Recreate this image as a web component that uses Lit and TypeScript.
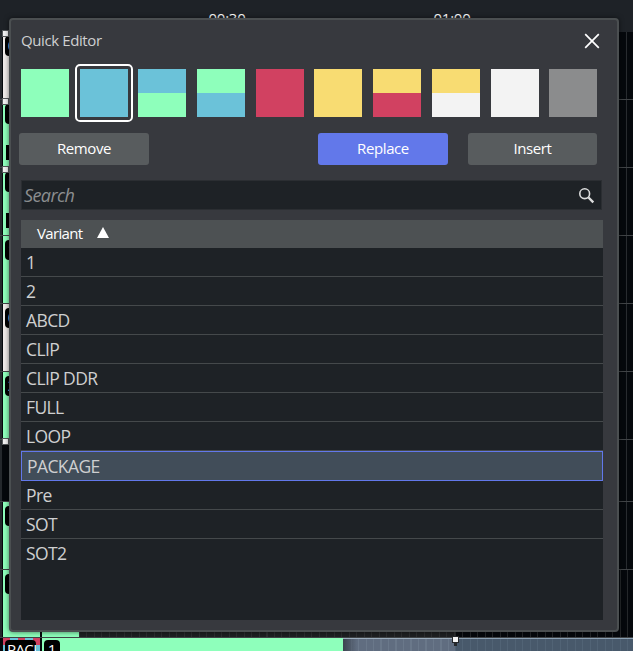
import { css, html, LitElement, nothing } from 'lit';
import { customElement, property, state } from 'lit/decorators.js';
import { classMap } from 'lit/directives/class-map.js';

interface Lane {
  color: string;
  label: string;
  short?: boolean;
  key?: boolean;
  mark?: boolean;
}

const GREEN = '#8effbb';
const BLUE = '#6bc2d9';
const RED = '#d14161';
const YELLOW = '#f8dc72';
const WHITE = '#f3f3f3';
const GRAY = '#8b8c8d';

const LANES: Lane[] = [
  { color: '#efebe9', label: '0', key: true },
  { color: GREEN, label: '1', key: true, mark: true },
  { color: GREEN, label: '1', key: true, mark: true },
  { color: GREEN, label: '1' },
  { color: '#efebe9', label: '0' },
  { color: GREEN, label: '2' },
  { color: '#05080c', label: '', short: true, key: true },
  { color: GREEN, label: '1' },
  { color: GREEN, label: '1' },
];

const SWATCHES = [
  [GREEN, GREEN],
  [BLUE, BLUE],
  [BLUE, GREEN],
  [GREEN, BLUE],
  [RED, RED],
  [YELLOW, YELLOW],
  [YELLOW, RED],
  [YELLOW, WHITE],
  [WHITE, WHITE],
  [GRAY, GRAY],
];

const VARIANTS = ['1', '2', 'ABCD', 'CLIP', 'CLIP DDR', 'FULL', 'LOOP', 'PACKAGE', 'Pre', 'SOT', 'SOT2'];

@customElement('timeline-view')
export class TimelineView extends LitElement {

  static get styles() {
    return css`
      :host {
        display: flex;
        flex-direction: column;
        height: 100%;
        background: #05080c;
        color: #fff;
        font-family: 'Open Sans', 'Noto Sans', sans-serif;
      }
      .ruler {
        position: relative;
        flex: none;
        height: 32px;
        background: #1e2227;
        font-size: 15px;
        line-height: 20px;
        letter-spacing: -0.25px;
      }
      .time {
        position: absolute;
        top: 8px;
        transform: translateX(-50%);
      }
      .lane {
        position: relative;
        flex: none;
        display: flex;
        gap: 2px;
        box-sizing: border-box;
        height: 68px;
        padding-left: 3px;
        border-bottom: 1px solid #404346;
        background:
          linear-gradient(#24282c, #24282c) 0 0 / 2px 100% no-repeat,
          linear-gradient(#282b2f, #282b2f) 626px 0 / 1px 100% no-repeat,
          #05080c;
      }
      .lane.short {
        height: 62px;
      }
      .clip {
        position: relative;
        width: 37px;
      }
      .badge {
        position: absolute;
        left: 2px;
        top: 4px;
        width: 14px;
        height: 20px;
        border-radius: 4px;
        background: #000;
        font-size: 15px;
        line-height: 18px;
        text-align: center;
      }
      .mark {
        position: absolute;
        left: 3px;
        bottom: 7px;
        width: 18px;
        height: 15px;
        background: #000;
      }
      .key {
        position: absolute;
        left: 3px;
        top: -1px;
        width: 5px;
        height: 5px;
        background: #f2f2f2;
        outline: 1px solid #55585a;
      }
      .ticks {
        flex: 1;
        margin-left: -2px;
        background: repeating-linear-gradient(90deg, #2d2f31 0 1px, #1e2022 1px 7.5px);
      }
      .ticks.late {
        flex: none;
        width: 178px;
        margin-left: -2px;
        background: repeating-linear-gradient(90deg, #24272a 0 1px, #05080c 1px 7.5px);
      }
      .current {
        position: relative;
        flex: 1;
        display: flex;
        min-height: 0;
        padding-left: 3px;
      }
      .current .badge {
        top: 2px;
        line-height: 19px;
        white-space: nowrap;
      }
      .package {
        position: relative;
        flex: none;
        width: 37px;
        margin-right: 2px;
        background:
          repeating-linear-gradient(90deg, #d14161 0 7px, #6bc2d9 7px 15px) 0 0 / 100% 3px no-repeat,
          repeating-linear-gradient(#d14161 0 7px, #6bc2d9 7px 14px);
      }
      .package .badge {
        width: 31px;
        overflow: hidden;
        letter-spacing: -0.6px;
        text-align: left;
        text-indent: 2px;
      }
      .playing {
        position: relative;
        flex: none;
        width: 301px;
        background: #8effbb;
      }
      .playing .badge {
        width: 16px;
      }
      .rest {
        box-sizing: border-box;
        border-top: 1px solid #9aacbd;
        width: 112px;
        background:
          linear-gradient(90deg, #3c4450 0, transparent 14px),
          repeating-linear-gradient(90deg, #6a788a 0 1px, #606d80 1px 7.5px);
      }
      .tail {
        box-sizing: border-box;
        flex: 1;
        border-top: 1px solid #8aa0b3;
        background: repeating-linear-gradient(90deg, #516375 0 1px, #48596b 1px 7.5px);
      }
      .handle {
        position: absolute;
        left: 453px;
        top: -1px;
        width: 5px;
        height: 5px;
        background: #f5f5f5;
        outline: 1px solid #25282b;
      }
      .stem {
        position: absolute;
        left: 454px;
        top: 5px;
        width: 3px;
        height: 3px;
        background: #25282b;
      }
    `;
  }

  render() {
    return html`
      <div class="ruler">
        <span class="time" style="left: 227px">00:30</span>
        <span class="time" style="left: 452px">01:00</span>
      </div>
      ${LANES.map((lane, i) => this.renderLane(lane, i === LANES.length - 1))}
      <div class="current">
        <div class="package"><div class="badge">PACK</div></div>
        <div class="playing"><div class="badge">1</div></div>
        <div class="rest"></div>
        <div class="tail"></div>
        <div class="stem"></div>
        <div class="handle"></div>
      </div>
    `;
  }

  renderLane(lane: Lane, last: boolean) {
    return html`
      <div class=${classMap({ lane: true, short: !!lane.short })}>
        <div class="clip" style="background: ${lane.color}">
          ${lane.label ? html`<div class="badge">${lane.label}</div>` : nothing}
          ${lane.mark ? html`<div class="mark"></div>` : nothing}
        </div>
        ${last ? html`
          <div class="clip" style="background: ${lane.color}"></div>
          <div class="ticks"></div>
          <div class="ticks late"></div>` : nothing}
        ${lane.key ? html`<div class="key"></div>` : nothing}
      </div>
    `;
  }
}

@customElement('quick-editor')
export class QuickEditor extends LitElement {

  @property({ type: Array }) variants: string[] = VARIANTS;

  @state() swatch = 1;

  @state() variant = 'PACKAGE';

  static get styles() {
    return css`
      :host {
        display: flex;
        flex-direction: column;
        box-sizing: border-box;
        width: 610px;
        height: 614px;
        padding: 0 14px 10px 10px;
        border: 2px solid #4b4f51;
        border-radius: 4px;
        background: #37393e;
        box-shadow: 0 0 5px rgba(0, 0, 0, 0.55);
        color: #fff;
        font-family: 'Open Sans', 'Noto Sans', sans-serif;
      }
      .header {
        display: flex;
        align-items: center;
        justify-content: space-between;
        height: 41px;
        padding-right: 3px;
      }
      .title {
        margin-top: -2px;
        color: #cfd0d1;
        font-size: 15px;
        letter-spacing: -0.4px;
      }
      .close {
        display: block;
      }
      .swatches {
        display: flex;
        gap: 10.7px;
        margin-top: 8px;
        padding-left: 0.05px;
      }
      .swatch {
        flex: none;
        width: 48px;
        height: 48px;
      }
      .swatch.selected {
        outline: 2px solid #fff;
        outline-offset: 3px;
        border-radius: 0.1px;
      }
      .half {
        height: 24px;
      }
      .actions {
        display: flex;
        gap: 20px;
        margin: 16px 6px 0 -2px;
      }
      .button {
        width: 130px;
        height: 32px;
        padding: 0 0 3px;
        border: 0;
        border-radius: 3px;
        background: #585c5e;
        color: #fff;
        font: inherit;
        font-size: 15px;
        letter-spacing: -0.4px;
      }
      .button.primary {
        margin-left: auto;
        background: #6278ea;
      }
      .button:last-child {
        width: 129px;
      }
      .search {
        display: flex;
        align-items: center;
        justify-content: space-between;
        box-sizing: border-box;
        height: 30px;
        margin: 15px 1px 0 0;
        padding: 0 6px 0 2px;
        border: 1px solid #2b2e32;
        background: #1e2226;
        color: #8c8e90;
        font-size: 18px;
        font-style: italic;
        letter-spacing: -0.6px;
      }
      .head {
        display: flex;
        align-items: center;
        gap: 14px;
        box-sizing: border-box;
        height: 28px;
        margin-top: 10px;
        padding: 0 16px 3px;
        background: #4d5153;
        font-size: 15px;
        letter-spacing: -0.65px;
      }
      .list {
        flex: 1;
        background: #1e2226;
        color: #cecfd0;
        font-size: 17.5px;
        letter-spacing: -0.6px;
      }
      .row {
        box-sizing: border-box;
        height: 29px;
        padding-left: 5px;
        border-bottom: 1px solid #45494b;
        line-height: 29px;
      }
      .row:last-child {
        border-bottom: 0;
      }
      .row.selected {
        height: 30px;
        border: 1px solid #6278ea;
        background: #414d59;
      }
    `;
  }

  render() {
    return html`
      <div class="header">
        <span class="title">Quick Editor</span>
        <svg class="close" width="16" height="16" viewBox="0 0 16 16">
          <path d="M1.2 1.2 14.8 14.8M14.8 1.2 1.2 14.8" stroke="#fff" stroke-width="1.7" fill="none" />
        </svg>
      </div>
      <div class="swatches">
        ${SWATCHES.map(([top, bottom], i) => html`
          <div class=${classMap({ swatch: true, selected: i === this.swatch })} @click=${() => { this.swatch = i; }}>
            <div class="half" style="background: ${top}"></div>
            <div class="half" style="background: ${bottom}"></div>
          </div>
        `)}
      </div>
      <div class="actions">
        <button class="button">Remove</button>
        <button class="button primary">Replace</button>
        <button class="button">Insert</button>
      </div>
      <div class="search">
        <span>Search</span>
        <svg width="17" height="17" viewBox="0 0 17 17" fill="none" stroke="#dcdddd">
          <circle cx="6.7" cy="6.7" r="4.9" stroke-width="1.6" />
          <path d="M10.5 10.5 15.3 15.3" stroke-width="2.4" />
        </svg>
      </div>
      <div class="head">
        <span>Variant</span>
        <svg width="12" height="11" viewBox="0 0 12 11"><path d="M6 0 12 11H0z" fill="#fff" /></svg>
      </div>
      <div class="list">
        ${this.variants.map(name => html`
          <div class=${classMap({ row: true, selected: name === this.variant })} @click=${() => { this.variant = name; }}>${name}</div>
        `)}
      </div>
    `;
  }
}

@customElement('app-root')
export class AppRoot extends LitElement {

  static get styles() {
    return css`
      :host {
        display: block;
        position: relative;
        height: 651px;
        overflow: hidden;
      }
      .dialog {
        position: absolute;
        left: 9px;
        top: 18px;
      }
    `;
  }

  render() {
    return html`
      <timeline-view></timeline-view>
      <quick-editor class="dialog"></quick-editor>
    `;
  }
}
